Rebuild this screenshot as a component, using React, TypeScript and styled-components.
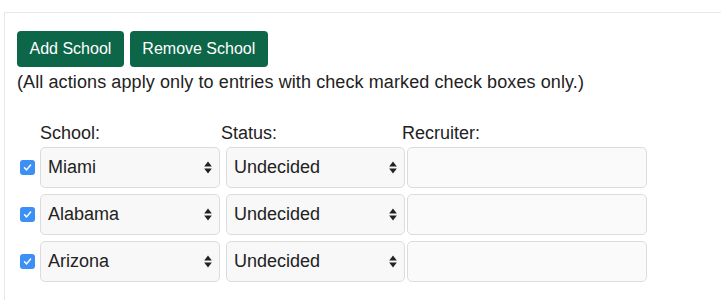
import styled, { createGlobalStyle } from "styled-components";

const Global = createGlobalStyle`
  html, body {
    margin: 0;
    padding: 0;
    background: #ffffff;
    font-family: "Liberation Sans", Arial, Helvetica, sans-serif;
    color: #222222;
  }
`;

const Panel = styled.div`
  margin: 12px 0 0 4px;
  border-top: 1px solid #e8e8e8;
  border-left: 1px solid #e8e8e8;
  padding: 18px 0 20px 12px;
  min-height: 260px;
  box-sizing: border-box;
`;

const Toolbar = styled.div`
  display: flex;
  gap: 6px;
`;

const Button = styled.button`
  height: 36px;
  padding: 0 12.5px;
  border: none;
  border-radius: 4px;
  background: #0d6648;
  color: #ffffff;
  font-family: "Liberation Sans", Arial, sans-serif;
  font-size: 16px;
  cursor: pointer;
`;

const Note = styled.p`
  margin: 4px 0 0 0;
  font-size: 18px;
  line-height: 22px;
  letter-spacing: 0.1px;
`;

const Table = styled.div`
  margin-top: 28px;
  display: flex;
  flex-direction: column;
  gap: 6px;
`;

const HeaderRow = styled.div`
  display: grid;
  grid-template-columns: 181px 181px 181px;
  padding: 2px 0 0 23px;
  margin-bottom: -2px;
  font-size: 18px;
  line-height: 20px;
`;

const Row = styled.div`
  display: flex;
  align-items: center;
`;

const Check = styled.span`
  display: inline-flex;
  align-items: center;
  justify-content: center;
  width: 15px;
  height: 15px;
  margin: 0 5px 0 3px;
  border-radius: 3px;
  background: #3b8ff5;
`;

const Select = styled.div<{ $width: number; $gap: number }>`
  display: flex;
  align-items: center;
  justify-content: space-between;
  width: ${({ $width }) => $width}px;
  height: 41px;
  box-sizing: border-box;
  margin-right: ${({ $gap }) => $gap}px;
  padding: 0 7px 0 7px;
  border: 1px solid #dcdcdc;
  border-radius: 5px;
  background: #f8f8f8;
  font-size: 18px;
`;

const TextInput = styled.input`
  height: 41px;
  box-sizing: border-box;
  width: 240px;
  border: 1px solid #dcdcdc;
  border-radius: 5px;
  background: #fafafa;
  font-size: 18px;
  padding: 0 8px;
  outline: none;
`;

function Arrows() {
  return (
    <svg width="8" height="13" viewBox="0 0 8 13">
      <path d="M4 0.5 L7.8 5.5 L0.2 5.5 Z" fill="#222" />
      <path d="M4 12.5 L7.8 7.5 L0.2 7.5 Z" fill="#222" />
    </svg>
  );
}

function Tick() {
  return (
    <svg width="11" height="11" viewBox="0 0 11 11">
      <path d="M2.5 5.8 L4.6 7.9 L8.6 3" stroke="#fff" strokeWidth="1.5" fill="none" strokeLinecap="round" strokeLinejoin="round" />
    </svg>
  );
}

const schools = ["Miami", "Alabama", "Arizona"];

export default function App() {
  return (
    <>
      <Global />
      <Panel>
        <Toolbar>
          <Button>Add School</Button>
          <Button>Remove School</Button>
        </Toolbar>
        <Note>(All actions apply only to entries with check marked check boxes only.)</Note>
        <Table>
          <HeaderRow>
            <span>School:</span>
            <span>Status:</span>
            <span>Recruiter:</span>
          </HeaderRow>
          {schools.map((s) => (
            <Row key={s}>
              <Check>
                <Tick />
              </Check>
              <Select $width={180} $gap={6}>
                <span>{s}</span>
                <Arrows />
              </Select>
              <Select $width={179} $gap={2}>
                <span>Undecided</span>
                <Arrows />
              </Select>
              <TextInput />
            </Row>
          ))}
        </Table>
      </Panel>
    </>
  );
}
